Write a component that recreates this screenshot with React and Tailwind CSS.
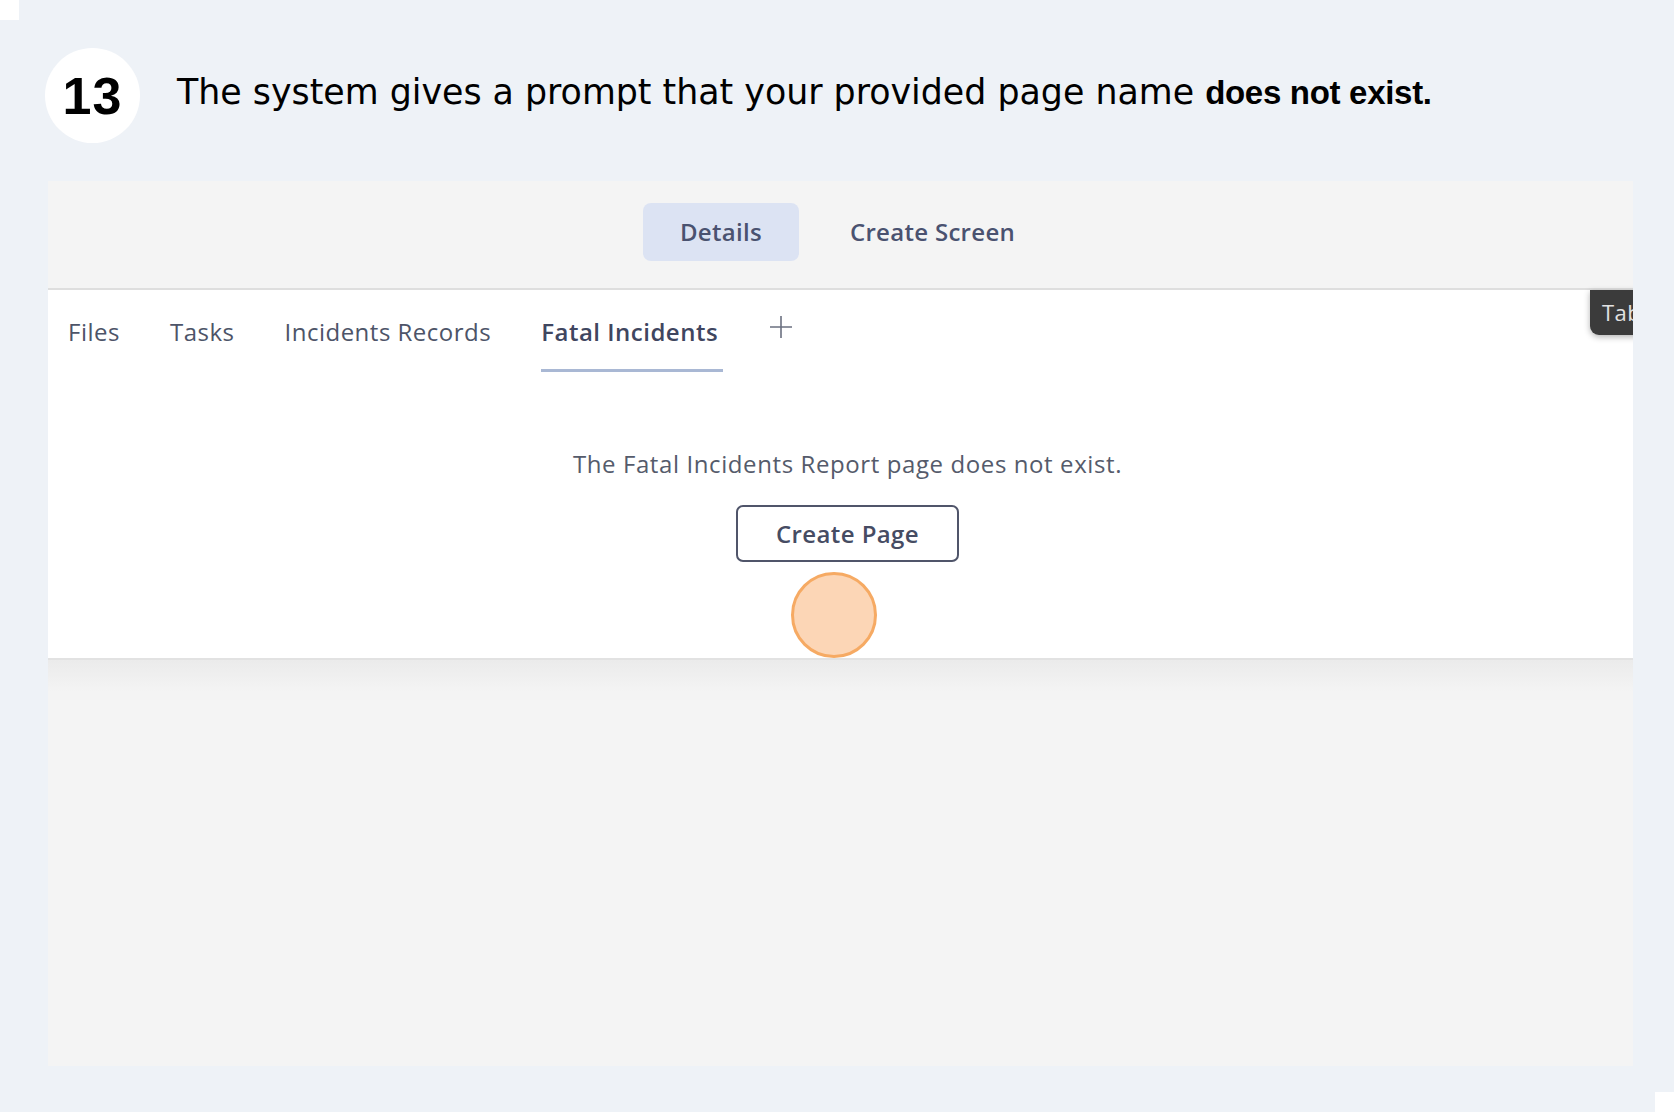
import React from 'react';

const ui = { fontFamily: '"Open Sans", "Noto Sans", sans-serif' };

const tabs = ['Files', 'Tasks', 'Incidents Records', 'Fatal Incidents'];

function StepHeader() {
  return (
    <div className="flex items-center">
      <div className="w-[95px] h-[95px] rounded-full bg-white flex items-center justify-center">
        <span className="text-[52px] leading-none font-bold text-black tracking-[1px]" style={{ fontFamily: '"Liberation Sans", Arial, sans-serif' }}>
          13
        </span>
      </div>
      <p className="ml-[37px] mt-[-6px] text-[34.8px] text-black" style={{ fontFamily: '"DejaVu Sans", sans-serif' }}>
        The system gives a prompt that your provided page name{' '}
        <b className="font-bold text-[33px] tracking-[-0.3px]" style={{ fontFamily: '"Liberation Sans", Arial, sans-serif' }}>
          does not exist.
        </b>
      </p>
    </div>
  );
}

function TopSwitch() {
  return (
    <div className="h-[109px] bg-[#f4f4f4] border-b-2 border-[#dedede] flex justify-center pt-[22px] pl-[14px] gap-[14px]">
      <div className="h-[58px] px-[37px] rounded-[8px] bg-[#dce3f3] flex items-center text-[24px] tracking-[0.3px] font-semibold text-[#4a5270]">
        Details
      </div>
      <div className="h-[58px] px-[37px] rounded-[8px] flex items-center text-[24px] tracking-[0.3px] font-semibold text-[#4a5270]">
        Create Screen
      </div>
    </div>
  );
}

function TabBar() {
  return (
    <div className="flex items-start gap-[50px] pl-[20px] pt-[28px]">
      {tabs.map((t) => {
        const active = t === 'Fatal Incidents';
        return (
          <div
            key={t}
            className={
              active
                ? 'text-[24px] leading-[28px] tracking-[0.5px] font-semibold text-[#3f4660] pb-[23px] pr-[5px] border-b-[3px] border-[#a9b8d4]'
                : 'text-[24px] leading-[28px] tracking-[0.5px] text-[#4d5468] pb-[23px]'
            }
          >
            {t}
          </div>
        );
      })}
      <svg width="24" height="24" viewBox="0 0 24 24" className="mt-[-3px] ml-[-4px]" fill="none" stroke="#6b7080" strokeWidth="1.6">
        <path d="M12 1v22M1 12h22" />
      </svg>
    </div>
  );
}

export default function App() {
  return (
    <div className="w-[1680px] h-[1116px] bg-white overflow-hidden" style={ui}>
      <div className="mt-[20px] w-[1655px] h-[1092px] bg-[#eef2f7] shadow-[19px_-20px_0_0_#eef2f7] pl-[45px] pt-[28px]">
        <StepHeader />

        <div className="relative ml-[3px] mt-[38px] w-[1585px] h-[885px] overflow-hidden bg-[#f4f4f4]">
          <TopSwitch />

          <div className="bg-white h-[370px] border-b-2 border-[#e2e2e2]">
            <TabBar />
            <div className="flex flex-col items-center pl-[14px] mt-[78px]">
              <p className="text-[24px] leading-[28px] tracking-[0.6px] text-[#555b6b]">
                The Fatal Incidents Report page does not exist.
              </p>
              <button className="mt-[27px] w-[223px] h-[57px] rounded-[7px] border-2 border-[#50556a] bg-white text-[24px] tracking-[0.4px] font-semibold text-[#464c63]">
                Create Page
              </button>
            </div>
          </div>
          <div className="h-[32px] bg-gradient-to-b from-[#ebebeb] to-[#f4f4f4]" />

          <div className="absolute left-[743px] top-[391px] w-[86px] h-[86px] rounded-full bg-[#fcd6b6] border-[3px] border-[#f6aa63]" />

          <div className="absolute left-[1542px] top-[109px] w-[60px] h-[45px] rounded-bl-[9px] bg-[#3b3b3b] shadow-[0_2px_6px_rgba(0,0,0,0.3)] pl-[12px] flex items-center text-[22px] tracking-[0.5px] text-[#e2e2e2]">
            Tab
          </div>
        </div>
      </div>
    </div>
  );
}
